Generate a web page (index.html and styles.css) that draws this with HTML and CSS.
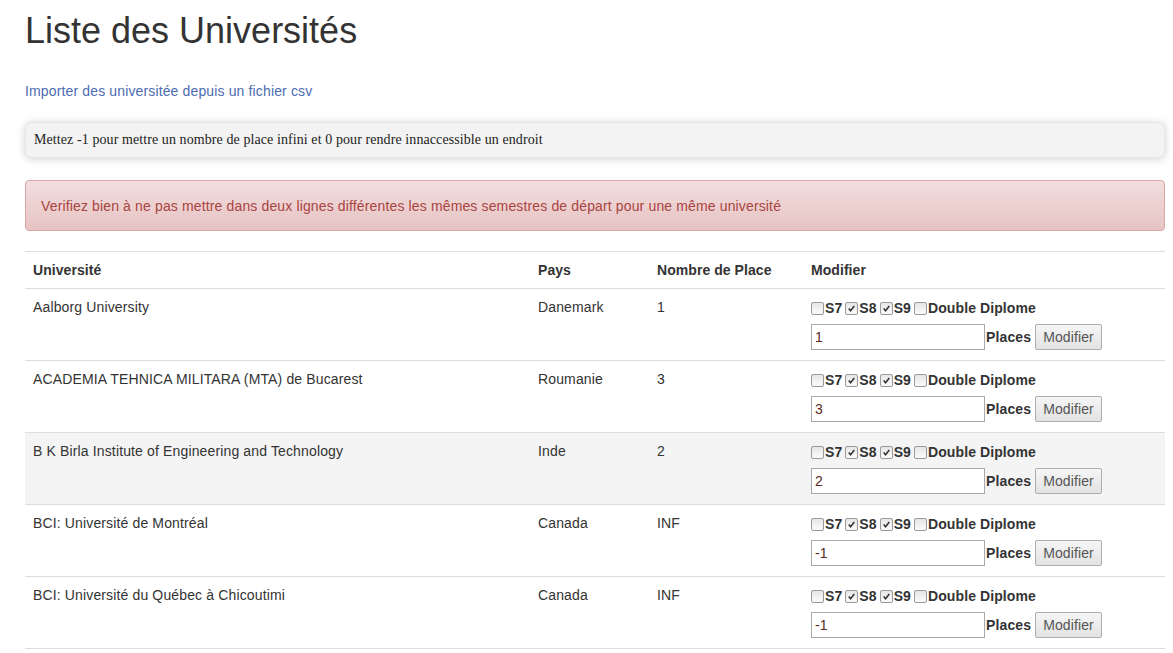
FILE: index.html
```html
<!DOCTYPE html>
<html lang="fr">
<head>
<meta charset="utf-8">
<title>Liste des Universités</title>
<link rel="stylesheet" href="styles.css">
</head>
<body>
<div class="container">
  <h1 class="title">Liste des Universités</h1>
  <p class="import"><a href="#">Importer des universitée depuis un fichier csv</a></p>
  <div class="well">Mettez -1 pour mettre un nombre de place infini et 0 pour rendre innaccessible un endroit</div>
  <div class="alert">Verifiez bien à ne pas mettre dans deux lignes différentes les mêmes semestres de départ pour une même université</div>
  <table class="table">
    <colgroup>
      <col class="c1"><col class="c2"><col class="c3"><col class="c4">
    </colgroup>
    <thead>
      <tr><th>Université</th><th>Pays</th><th>Nombre de Place</th><th>Modifier</th></tr>
    </thead>
    <tbody>
      <tr>
        <td>Aalborg University</td><td>Danemark</td><td>1</td>
        <td>
          <div class="checks">
            <span class="cb"></span><b>S7</b>
            <span class="cb on"><svg viewBox="0 0 13 13"><path d="M3.2 6.6 L5.4 9.2 L9.8 3.6" fill="none" stroke="#333" stroke-width="1.8"/></svg></span><b>S8</b>
            <span class="cb on"><svg viewBox="0 0 13 13"><path d="M3.2 6.6 L5.4 9.2 L9.8 3.6" fill="none" stroke="#333" stroke-width="1.8"/></svg></span><b>S9</b>
            <span class="cb"></span><b>Double Diplome</b>
          </div>
          <div class="form-line"><input class="places" type="text" value="1"><b>Places</b><button class="btn">Modifier</button></div>
        </td>
      </tr>
      <tr>
        <td>ACADEMIA TEHNICA MILITARA (MTA) de Bucarest</td><td>Roumanie</td><td>3</td>
        <td>
          <div class="checks">
            <span class="cb"></span><b>S7</b>
            <span class="cb on"><svg viewBox="0 0 13 13"><path d="M3.2 6.6 L5.4 9.2 L9.8 3.6" fill="none" stroke="#333" stroke-width="1.8"/></svg></span><b>S8</b>
            <span class="cb on"><svg viewBox="0 0 13 13"><path d="M3.2 6.6 L5.4 9.2 L9.8 3.6" fill="none" stroke="#333" stroke-width="1.8"/></svg></span><b>S9</b>
            <span class="cb"></span><b>Double Diplome</b>
          </div>
          <div class="form-line"><input class="places" type="text" value="3"><b>Places</b><button class="btn">Modifier</button></div>
        </td>
      </tr>
      <tr class="hover">
        <td>B K Birla Institute of Engineering and Technology</td><td>Inde</td><td>2</td>
        <td>
          <div class="checks">
            <span class="cb"></span><b>S7</b>
            <span class="cb on"><svg viewBox="0 0 13 13"><path d="M3.2 6.6 L5.4 9.2 L9.8 3.6" fill="none" stroke="#333" stroke-width="1.8"/></svg></span><b>S8</b>
            <span class="cb on"><svg viewBox="0 0 13 13"><path d="M3.2 6.6 L5.4 9.2 L9.8 3.6" fill="none" stroke="#333" stroke-width="1.8"/></svg></span><b>S9</b>
            <span class="cb"></span><b>Double Diplome</b>
          </div>
          <div class="form-line"><input class="places" type="text" value="2"><b>Places</b><button class="btn">Modifier</button></div>
        </td>
      </tr>
      <tr>
        <td>BCI: Université de Montréal</td><td>Canada</td><td>INF</td>
        <td>
          <div class="checks">
            <span class="cb"></span><b>S7</b>
            <span class="cb on"><svg viewBox="0 0 13 13"><path d="M3.2 6.6 L5.4 9.2 L9.8 3.6" fill="none" stroke="#333" stroke-width="1.8"/></svg></span><b>S8</b>
            <span class="cb on"><svg viewBox="0 0 13 13"><path d="M3.2 6.6 L5.4 9.2 L9.8 3.6" fill="none" stroke="#333" stroke-width="1.8"/></svg></span><b>S9</b>
            <span class="cb"></span><b>Double Diplome</b>
          </div>
          <div class="form-line"><input class="places" type="text" value="-1"><b>Places</b><button class="btn">Modifier</button></div>
        </td>
      </tr>
      <tr>
        <td>BCI: Université du Québec à Chicoutimi</td><td>Canada</td><td>INF</td>
        <td>
          <div class="checks">
            <span class="cb"></span><b>S7</b>
            <span class="cb on"><svg viewBox="0 0 13 13"><path d="M3.2 6.6 L5.4 9.2 L9.8 3.6" fill="none" stroke="#333" stroke-width="1.8"/></svg></span><b>S8</b>
            <span class="cb on"><svg viewBox="0 0 13 13"><path d="M3.2 6.6 L5.4 9.2 L9.8 3.6" fill="none" stroke="#333" stroke-width="1.8"/></svg></span><b>S9</b>
            <span class="cb"></span><b>Double Diplome</b>
          </div>
          <div class="form-line"><input class="places" type="text" value="-1"><b>Places</b><button class="btn">Modifier</button></div>
        </td>
      </tr>
    </tbody>
  </table>
</div>
</body>
</html>
```
FILE: styles.css
```css
html, body {
  margin: 0;
  padding: 0;
  background: #fff;
}
body {
  font-family: "Liberation Sans", Arial, sans-serif;
  font-size: 14px;
  line-height: 20px;
  color: #333;
  letter-spacing: 0.14px;
}
.container {
  width: 1140px;
  padding-left: 25px;
}
.title {
  margin: 11px 0 0;
  font-size: 36px;
  line-height: 40px;
  font-weight: 400;
  color: #333;
  letter-spacing: 0;
}
.import {
  margin: 30px 0 0;
}
.import a {
  color: #4c6cb2;
  text-decoration: none;
}
.well {
  margin-top: 21px;
  padding: 7px 8px;
  border: 1px solid #e6e6e6;
  border-radius: 6px;
  background: #f3f3f3;
  box-shadow: 0 1px 8px rgba(0,0,0,0.18);
  font-family: "Liberation Serif", "Times New Roman", serif;
  font-size: 14px;
  color: #222;
  letter-spacing: 0.085px;
}
.alert {
  margin-top: 22px;
  padding: 15px 15px 14px;
  border: 1px solid #dca7a7;
  border-radius: 4px;
  background: linear-gradient(to bottom, #f2dede 0%, #e7c3c3 100%);
  color: #a94442;
}
.table {
  margin-top: 20px;
  width: 1140px;
  border-collapse: collapse;
  table-layout: fixed;
}
.c1 { width: 505px; }
.c2 { width: 119px; }
.c3 { width: 154px; }
.c4 { width: 362px; }
.table th, .table td {
  padding: 8px;
  text-align: left;
  vertical-align: top;
  border-top: 1px solid #ddd;
}
.table th {
  font-weight: 700;
  letter-spacing: 0.06px;
}
.table tbody tr:last-child td {
  border-bottom: 1px solid #ddd;
}
.table tr.hover td {
  background: #f4f4f4;
}
.checks {
  display: flex;
  align-items: center;
  height: 22px;
  margin-bottom: 5px;
  letter-spacing: 0.1px;
}
.checks b {
  margin-right: 3px;
  margin-left: 1px;
}
.cb {
  display: inline-block;
  box-sizing: border-box;
  width: 13px;
  height: 13px;
  border: 1px solid #9a9a9a;
  border-radius: 2px;
  background: linear-gradient(to bottom, #e6e6e6, #fbfbfb);
}
.cb svg {
  display: block;
  width: 11px;
  height: 11px;
}
.form-line {
  display: flex;
  align-items: center;
  height: 26px;
  padding-bottom: 2px;
}
.places {
  box-sizing: border-box;
  width: 174px;
  height: 26px;
  margin: 0;
  padding: 1px 3px;
  border: 1px solid #a9a9a9;
  font-family: "Liberation Sans", Arial, sans-serif;
  font-size: 14px;
  color: #5a2a22;
  background: #fff;
}
.form-line b {
  margin-left: 1px;
  margin-right: 4px;
}
.btn {
  box-sizing: border-box;
  height: 26px;
  padding: 0 7px;
  border: 1px solid #adadad;
  border-radius: 2px;
  background: linear-gradient(to bottom, #f6f6f6, #e2e2e2);
  font-family: "Liberation Sans", Arial, sans-serif;
  font-size: 14px;
  color: #555;
  letter-spacing: 0.1px;
}
```
